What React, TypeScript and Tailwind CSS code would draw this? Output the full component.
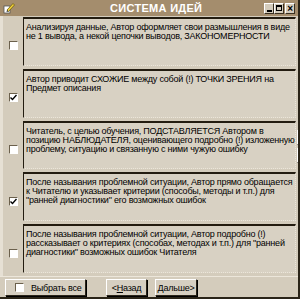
import { Fragment } from "react";

type Idea = { lines: string[]; checked: boolean };

const ideas: Idea[] = [
  {
    lines: [
      "Анализируя данные, Автор оформляет свои размышления в виде",
      "не 1 вывода, а некой цепочки выводов, ЗАКОНОМЕРНОСТИ",
    ],
    checked: false,
  },
  {
    lines: [
      "Автор приводит СХОЖИЕ между собой (!) ТОЧКИ ЗРЕНИЯ на",
      "Предмет описания",
    ],
    checked: true,
  },
  {
    lines: [
      "Читатель, с целью обучения, ПОДСТАВЛЯЕТСЯ Автором в",
      "позицию НАБЛЮДАТЕЛЯ, оценивающего подробно (!) изложенную",
      "проблему, ситуацию и связанную с ними чужую ошибку",
    ],
    checked: false,
  },
  {
    lines: [
      "После называния проблемной ситуации, Автор прямо обращается",
      "к Читателю и указывает критерии (способы, методы и т.п.) для",
      "\"ранней диагностики\" его возможных ошибок",
    ],
    checked: true,
  },
  {
    lines: [
      "После называния проблемной ситуации, Автор подробно (!)",
      "рассказывает о критериях (способах, методах и т.п.) для \"ранней",
      "диагностики\" возможных ошибок Читателя",
    ],
    checked: false,
  },
];

function CheckBox({ checked }: { checked: boolean }) {
  return (
    <div className="flex h-[9px] w-[9px] shrink-0 items-center justify-center border-t border-l border-[#6b604c] border-r border-b border-r-white border-b-white bg-white">
      {checked && (
        <svg width="7" height="7" viewBox="0 0 7 7">
          <path d="M0.5 3.5 L2.5 5.5 L6.5 1" stroke="#000" strokeWidth="1.4" fill="none" />
        </svg>
      )}
    </div>
  );
}

function WinButton({ children }: { children: React.ReactNode }) {
  return (
    <div className="flex h-[11px] w-[10px] items-center justify-center border border-t-white border-l-white border-r-[#3a3020] border-b-[#3a3020] bg-[#d4ccbc]">
      {children}
    </div>
  );
}

function Btn({ children, className }: { children: React.ReactNode; className?: string }) {
  return (
    <div
      className={`flex h-[17px] items-center whitespace-nowrap border border-t-white border-l-white border-r-[#2a2418] border-b-[#2a2418] bg-[#d6cfc1] shadow-[1px_1px_0_#000] ${className ?? ""}`}
    >
      {children}
    </div>
  );
}

export default function App() {
  return (
    <div
      className="flex h-[299px] w-[300px] flex-col overflow-hidden border-r-2 border-b-2 border-r-[#2a2418] border-b-[#2a2418] bg-[#d4ccbc] text-[9px] leading-[9px] tracking-[-0.22px] text-black"
      style={{ fontFamily: '"Liberation Sans", Arial, sans-serif' }}
    >
      {/* title bar */}
      <div className="relative flex h-[16px] shrink-0 items-center bg-[#a48d6d]">
        <svg className="ml-[3px]" width="12" height="12" viewBox="0 0 12 12">
          <rect x="1" y="4" width="6" height="7" fill="#fff" stroke="#555" strokeWidth="0.8" />
          <path d="M4 8 L10 1.5 L11.5 3 L5.5 9.5 Z" fill="#f2d23a" stroke="#6b5a10" strokeWidth="0.8" />
          <path d="M4 8 L3.5 10 L5.5 9.5 Z" fill="#333" />
        </svg>
        <div className="absolute left-[110px] top-[2px] text-[11px] font-bold leading-[12px] tracking-[0.3px] text-white">
          СИСТЕМА ИДЕЙ
        </div>
        <div className="ml-auto mr-[3px] flex gap-0">
          <WinButton>
            <div className="mt-[5px] h-[2px] w-[5px] bg-black" />
          </WinButton>
          <WinButton>
            <div className="h-[6px] w-[6px] border border-t-2 border-black" />
          </WinButton>
          <div className="ml-[1px]">
            <WinButton>
              <span className="text-[10px] font-bold leading-[9px]">×</span>
            </WinButton>
          </div>
        </div>
      </div>

      {/* main area */}
      <div className="flex h-[260px] shrink-0 border-l-[3px] border-l-[#e6e0d4]">
        <div className="flex flex-1 flex-col pt-[1px]">
          {ideas.map((idea, i) => (
            <div key={i} className="flex h-[52px]">
              <div className="flex w-[20px] items-center justify-center pt-[6px]">
                <CheckBox checked={idea.checked} />
              </div>
              <div className="mb-[3px] flex-1 overflow-hidden border-t-2 border-l border-t-[#231c10] border-l-[#231c10] border-r border-b border-r-[#ece6da] border-b-[#ece6da] bg-[#d8d1c3] pl-[2px] pt-[4px] [border-bottom-style:dotted] [border-right-style:dotted]">
                {idea.lines.map((l, j) => (
                  <Fragment key={j}>
                    <div className="whitespace-nowrap">{l}</div>
                  </Fragment>
                ))}
              </div>
            </div>
          ))}
        </div>
        <div className="flex w-[22px] flex-col items-center justify-center gap-[3px] border-r border-r-[#ece6da] pl-[1px]">
          <div className="flex h-[15px] w-[15px] items-center justify-center border border-t-white border-l-white border-r-[#2a2418] border-b-[#2a2418] bg-[#d6cfc1]">
            <svg width="9" height="5" viewBox="0 0 9 5">
              <path d="M0 5 L4.5 0 L9 5 Z" fill="#a08a66" />
            </svg>
          </div>
          <div className="flex h-[15px] w-[15px] items-center justify-center border border-t-white border-l-white border-r-[#2a2418] border-b-[#2a2418] bg-[#d6cfc1]">
            <svg width="9" height="5" viewBox="0 0 9 5">
              <path d="M0 0 L9 0 L4.5 5 Z" fill="#000" />
            </svg>
          </div>
        </div>
      </div>

      {/* footer */}
      <div className="flex flex-1 items-center gap-0 border-t border-t-[#ece6da] pl-[5px] pt-[1px]">
        <Btn className="w-[81px] pl-[9px]">
          <CheckBox checked={false} />
          <span className="ml-[7px] leading-[10px]">Выбрать все</span>
        </Btn>
        <Btn className="ml-[20px] w-[41px] justify-center">
          <span className="leading-[10px]">
            &lt;<span className="underline">Н</span>азад
          </span>
        </Btn>
        <Btn className="ml-[8px] w-[42px] justify-center">
          <span className="leading-[10px]">
            <span className="underline">Д</span>альше&gt;
          </span>
        </Btn>
      </div>
    </div>
  );
}
